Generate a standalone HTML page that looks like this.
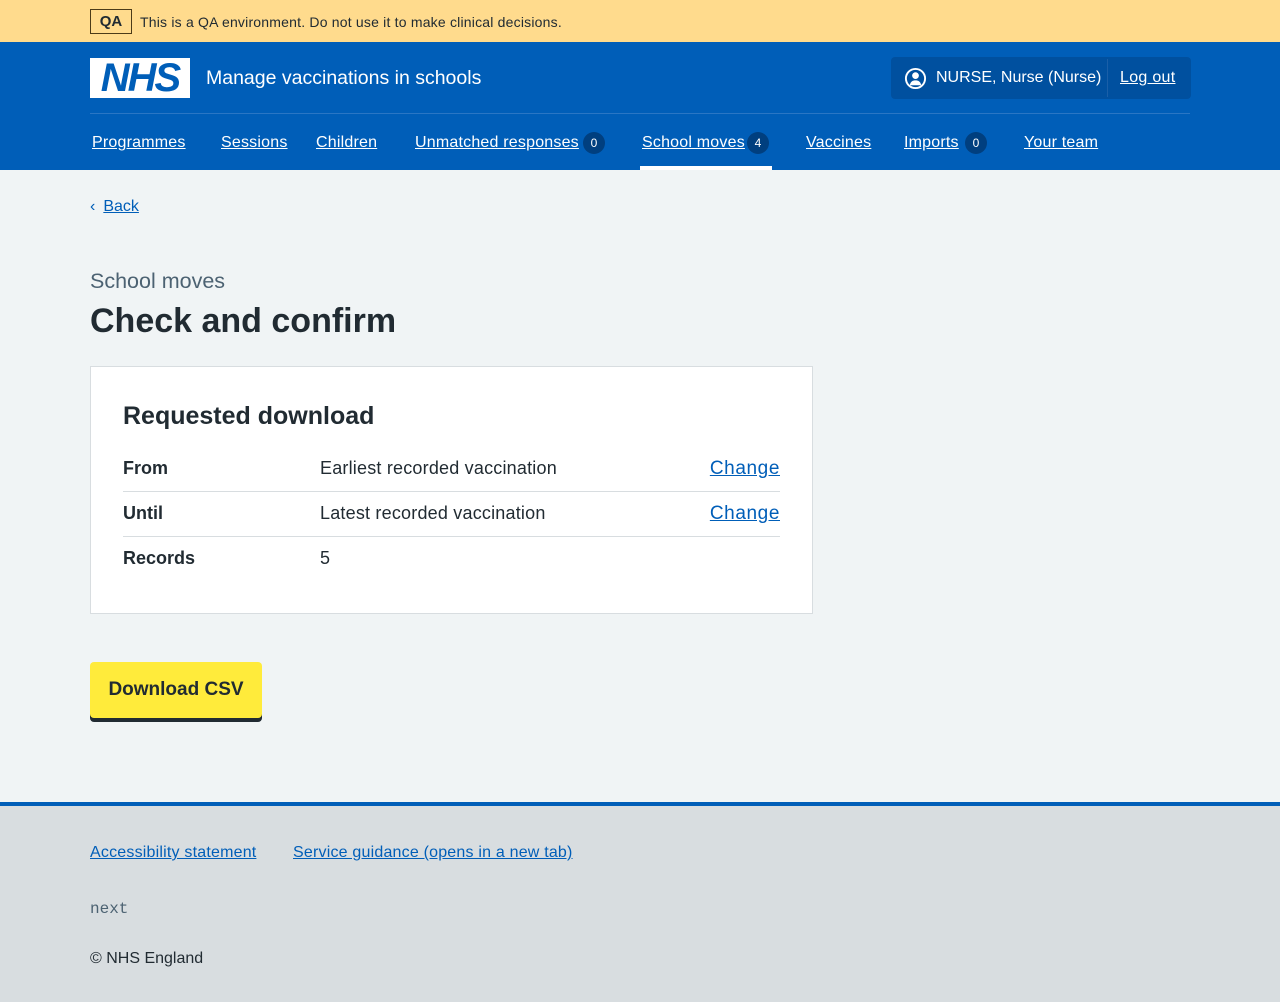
<!DOCTYPE html>
<html><head><meta charset="utf-8"><style>
*{box-sizing:border-box;margin:0;padding:0}
body{width:1280px;height:1002px;background:#f0f4f5;font-family:"Liberation Sans",Arial,sans-serif;color:#212b32;position:relative;overflow:hidden}
a{color:#005eb8}
.qa{position:absolute;top:0;left:0;width:1280px;height:42px;background:#ffdb8d}
.qa .tag{position:absolute;left:90px;top:9px;width:42px;height:25px;border:1px solid #4c3b18;font-weight:bold;font-size:15px;text-align:center;line-height:23px}
.qa .t{position:absolute;left:140px;top:14px;font-size:14px;color:#212b32;letter-spacing:0.2px}
.hdr{position:absolute;top:42px;left:0;width:1280px;height:128px;background:#005eb8;color:#fff}
.logo{position:absolute;left:90px;top:16px;width:100px;height:40px;background:#fff;color:#005eb8;font-weight:bold;font-style:italic;font-size:40px;line-height:40px;text-align:center;letter-spacing:-2px}
.svc{position:absolute;left:206px;top:25px;font-size:19.5px}
.acct{position:absolute;left:891px;top:15px;width:300px;height:42px;background:#00509f;border-radius:4px}
.acct .n{position:absolute;left:45px;top:12px;font-size:16px}
.acct .sep{position:absolute;left:216px;top:2px;width:1px;height:38px;background:#1a5fa8}
.acct a{position:absolute;left:229px;top:12px;font-size:16px;color:#fff;letter-spacing:0.3px}
.line{position:absolute;left:90px;top:71px;width:1100px;height:1px;background:#2a76c4}
.nav a{position:absolute;top:92px;font-size:16px;color:#fff;letter-spacing:0.2px}
.b{display:inline-block;width:22px;height:22px;border-radius:11px;background:#003f7f;color:#fff;font-size:12px;text-align:center;line-height:22px;text-decoration:none;position:absolute;top:90px}
.act{position:absolute;left:640px;top:124px;width:132px;height:4px;background:#fff}
h1{position:absolute;left:90px;top:302px;font-size:34px;font-weight:bold}
.cap{position:absolute;left:90px;top:269px;font-size:21.5px;color:#4c6272}
.card{position:absolute;left:90px;top:366px;width:723px;height:248px;background:#fff;border:1px solid #d8dde0}
.card h2{position:absolute;left:32px;top:35px;font-size:25px}
.row{position:absolute;left:32px;width:657px;height:45px;font-size:18px}
.row b{position:absolute;left:0;top:11px}
.row span{position:absolute;left:197px;top:11px;letter-spacing:0.2px}
.row a{position:absolute;right:0;top:11px;font-size:19px;letter-spacing:0.6px}
.btn{position:absolute;left:90px;top:662px;width:172px;height:56px;background:#ffeb3b;border-radius:4px;box-shadow:0 4px 0 #212b32;font-weight:bold;font-size:19px;text-align:center;line-height:56px}
.foot{position:absolute;top:802px;left:0;width:1280px;height:200px;background:#d8dde0;border-top:4px solid #005eb8}
</style></head><body>
<div class="qa"><div class="tag">QA</div><div class="t">This is a QA environment. Do not use it to make clinical decisions.</div></div>
<div class="hdr">
<div class="logo">NHS</div>
<div class="svc">Manage vaccinations in schools</div>
<div class="acct"><svg style="position:absolute;left:13px;top:10px" width="23" height="23" viewBox="0 0 24 24"><circle cx="12" cy="12" r="10" fill="none" stroke="#fff" stroke-width="2"/><circle cx="12" cy="9" r="3.5" fill="#fff"/><path d="M6 19c1-4 3-5 6-5s5 1 6 5z" fill="#fff"/></svg><span class="n">NURSE, Nurse (Nurse)</span><div class="sep"></div><a href="#">Log out</a></div>
<div class="line"></div>
<div class="nav">
<a href="#" style="left:92px">Programmes</a>
<a href="#" style="left:221px">Sessions</a>
<a href="#" style="left:316px">Children</a>
<a href="#" style="left:415px">Unmatched responses</a><span class="b" style="left:583px">0</span>
<a href="#" style="left:642px">School moves</a><span class="b" style="left:747px">4</span>
<a href="#" style="left:806px">Vaccines</a>
<a href="#" style="left:904px">Imports</a><span class="b" style="left:965px">0</span>
<a href="#" style="left:1024px">Your team</a>
</div>
<div class="act"></div>
</div>
<div style="position:absolute;left:90px;top:198px;font-size:16px"><span style="color:#005eb8;margin-right:8px">‹</span><a href="#">Back</a></div>
<div class="cap">School moves</div>
<h1>Check and confirm</h1>
<div class="card"><h2>Requested download</h2>
<div class="row" style="top:80px;border-bottom:1px solid #d8dde0"><b>From</b><span>Earliest recorded vaccination</span><a href="#">Change</a></div>
<div class="row" style="top:125px;border-bottom:1px solid #d8dde0"><b>Until</b><span>Latest recorded vaccination</span><a href="#">Change</a></div>
<div class="row" style="top:170px"><b>Records</b><span>5</span></div>
</div>
<div class="btn">Download CSV</div>
<div class="foot">
<a href="#" style="position:absolute;left:90px;top:38px;font-size:16px;letter-spacing:0.2px">Accessibility statement</a>
<a href="#" style="position:absolute;left:293px;top:38px;font-size:16px;letter-spacing:0.2px">Service guidance (opens in a new tab)</a>
<div style="position:absolute;left:90px;top:94px;font-family:'Liberation Mono',monospace;font-size:16px;color:#4c6272">next</div>
<div style="position:absolute;left:90px;top:144px;font-size:16px">© NHS England</div>
</div>
</body></html>
